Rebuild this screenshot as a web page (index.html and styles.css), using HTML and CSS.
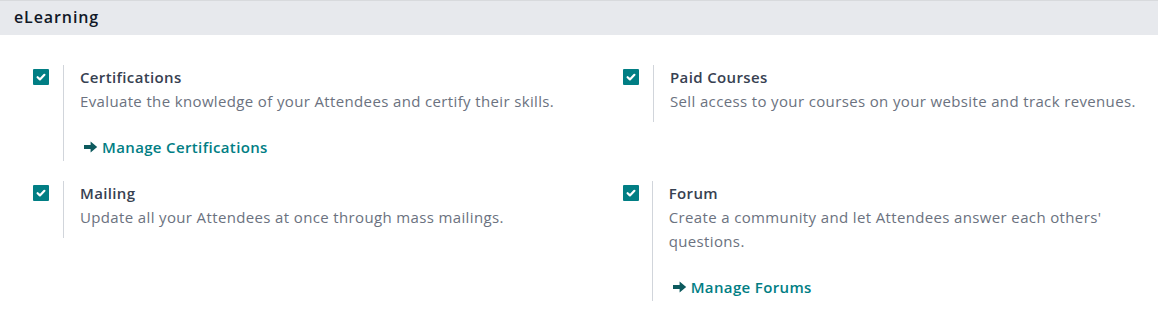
FILE: index.html
```html
<!DOCTYPE html>
<html lang="en">
<head>
  <meta charset="UTF-8" />
  <title>Settings - eLearning</title>
  <link rel="stylesheet" href="styles.css">
</head>
<body>
  <h2 class="block-title">eLearning</h2>

  <div class="settings">
    <!-- Certifications -->
    <div class="setting">
      <div class="check"><span class="box"><svg viewBox="0 0 16 16"><path d="M4.6 8.2l2.3 2.2 4.5-4.6"/></svg></span></div>
      <div class="right">
        <div class="label">Certifications</div>
        <div class="desc">Evaluate the knowledge of your Attendees and certify their skills.</div>
        <a class="link" href="#"><svg class="arrow" viewBox="0 0 14 12"><path d="M0 4.1h6.6V0.6l6.6 5.4-6.6 5.4V7.9H0z"/></svg>Manage Certifications</a>
      </div>
    </div>

    <!-- Paid Courses -->
    <div class="setting">
      <div class="check"><span class="box"><svg viewBox="0 0 16 16"><path d="M4.6 8.2l2.3 2.2 4.5-4.6"/></svg></span></div>
      <div class="right">
        <div class="label">Paid Courses</div>
        <div class="desc">Sell access to your courses on your website and track revenues.</div>
      </div>
    </div>

    <!-- Mailing -->
    <div class="setting">
      <div class="check"><span class="box"><svg viewBox="0 0 16 16"><path d="M4.6 8.2l2.3 2.2 4.5-4.6"/></svg></span></div>
      <div class="right">
        <div class="label">Mailing</div>
        <div class="desc">Update all your Attendees at once through mass mailings.</div>
      </div>
    </div>

    <!-- Forum -->
    <div class="setting">
      <div class="check"><span class="box"><svg viewBox="0 0 16 16"><path d="M4.6 8.2l2.3 2.2 4.5-4.6"/></svg></span></div>
      <div class="right">
        <div class="label">Forum</div>
        <div class="desc">Create a community and let Attendees answer each others' questions.</div>
        <a class="link" href="#"><svg class="arrow" viewBox="0 0 14 12"><path d="M0 4.1h6.6V0.6l6.6 5.4-6.6 5.4V7.9H0z"/></svg>Manage Forums</a>
      </div>
    </div>
  </div>
</body>
</html>
```

FILE: styles.css
```css
body {
  margin: 0;
  font-family: "Open Sans", "Noto Sans", sans-serif;
  font-size: 15px;
  letter-spacing: 0.36px;
  color: #374151;
  background: #fff;
}

.block-title {
  margin: 0;
  height: 35px;
  line-height: 33px;
  padding-left: 14px;
  background-color: #e7e9ed;
  border-top: 1px solid #d8dadd;
  box-sizing: border-box;
  font-size: 16px;
  letter-spacing: 0.9px;
  font-weight: 600;
  color: #111827;
}

.settings {
  display: grid;
  grid-template-columns: 590px 1fr;
  padding: 30px 0 0 21px;
  row-gap: 20px;
}

.setting {
  display: flex;
  align-items: flex-start;
}

.check {
  width: 42px;
  padding: 4px 0 0 12px;
  box-sizing: border-box;
}

.box {
  display: block;
  width: 16px;
  height: 16px;
  background: #017e84;
  border-radius: 1px;
}

.box svg {
  display: block;
  width: 16px;
  height: 16px;
}

.box path {
  fill: none;
  stroke: #fff;
  stroke-width: 2.2;
  stroke-linecap: round;
  stroke-linejoin: round;
}

.right {
  border-left: 1px solid #d1d5db;
  padding: 0 16px 2px 16px;
  min-height: 55px;
}

.label {
  font-weight: 600;
  line-height: 24px;
  color: #374151;
}

.desc {
  line-height: 24px;
  color: #6b7280;
  max-width: 495px;
}

.link {
  display: flex;
  align-items: center;
  margin-top: 22px;
  padding-left: 4px;
  color: #017e84;
  font-weight: 600;
  text-decoration: none;
  line-height: 24px;
}

.arrow {
  width: 14px;
  height: 12px;
  margin-right: 4px;
  fill: #0d5a5e;
}
```
